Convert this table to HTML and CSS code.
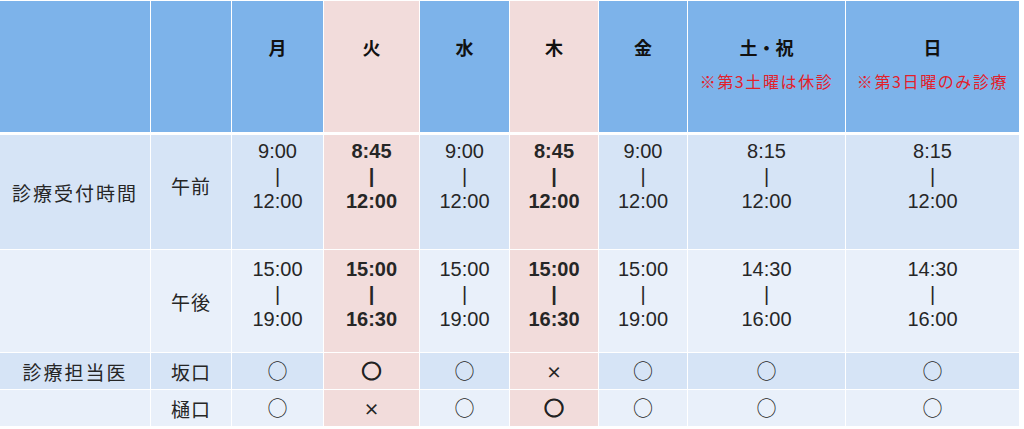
FILE: index.html
```html
<!DOCTYPE html>
<html lang="ja">
<head>
<meta charset="utf-8">
<title>診療時間</title>
<link rel="stylesheet" href="styles.css">
</head>
<body>
<table class="schedule">
  <colgroup>
    <col class="c-label"><col class="c-sub"><col class="c-mon"><col class="c-tue"><col class="c-wed"><col class="c-thu"><col class="c-fri"><col class="c-sat"><col class="c-sun">
  </colgroup>
  <thead>
    <tr>
      <th></th><th></th>
      <th><span class="day">月</span></th>
      <th class="pink"><span class="day">火</span></th>
      <th><span class="day">水</span></th>
      <th class="pink"><span class="day">木</span></th>
      <th><span class="day">金</span></th>
      <th><span class="day">土・祝</span><span class="note">※第3土曜は休診</span></th>
      <th><span class="day">日</span><span class="note">※第3日曜のみ診療</span></th>
    </tr>
  </thead>
  <tbody>
    <tr class="r-am">
      <td class="label">診療受付時間</td>
      <td class="sub sub-am">午前</td>
      <td class="time">9:00<br>|<br>12:00</td>
      <td class="time pink bold">8:45<br>|<br>12:00</td>
      <td class="time">9:00<br>|<br>12:00</td>
      <td class="time pink bold">8:45<br>|<br>12:00</td>
      <td class="time">9:00<br>|<br>12:00</td>
      <td class="time">8:15<br>|<br>12:00</td>
      <td class="time">8:15<br>|<br>12:00</td>
    </tr>
    <tr class="r-pm">
      <td class="label"></td>
      <td class="sub">午後</td>
      <td class="time">15:00<br>|<br>19:00</td>
      <td class="time pink bold">15:00<br>|<br>16:30</td>
      <td class="time">15:00<br>|<br>19:00</td>
      <td class="time pink bold">15:00<br>|<br>16:30</td>
      <td class="time">15:00<br>|<br>19:00</td>
      <td class="time">14:30<br>|<br>16:00</td>
      <td class="time">14:30<br>|<br>16:00</td>
    </tr>
    <tr class="r-doc1">
      <td class="label">診療担当医</td>
      <td class="sub">坂口</td>
      <td class="mark">○</td>
      <td class="mark pink bold">○</td>
      <td class="mark">○</td>
      <td class="mark pink x">×</td>
      <td class="mark">○</td>
      <td class="mark">○</td>
      <td class="mark">○</td>
    </tr>
    <tr class="r-doc2">
      <td class="label"></td>
      <td class="sub">樋口</td>
      <td class="mark">○</td>
      <td class="mark pink x">×</td>
      <td class="mark">○</td>
      <td class="mark pink bold">○</td>
      <td class="mark">○</td>
      <td class="mark">○</td>
      <td class="mark">○</td>
    </tr>
  </tbody>
</table>
</body>
</html>
```

FILE: styles.css
```css
html, body {
  margin: 0;
  padding: 0;
  background: #ffffff;
}

.schedule {
  border-collapse: separate;
  border-spacing: 1px;
  table-layout: fixed;
  width: 1021px;
  margin: 0 0 0 -1px;
  font-family: "Noto Sans CJK JP", sans-serif;
  color: #262626;
}

.c-label { width: 150px; }
.c-sub { width: 80px; }
.c-mon { width: 91px; }
.c-tue { width: 95px; }
.c-wed { width: 89px; }
.c-thu { width: 88px; }
.c-fri { width: 88px; }
.c-sat { width: 157px; }
.c-sun { width: 173px; }

.schedule th,
.schedule td {
  box-sizing: border-box;
  padding: 0;
  text-align: center;
}

/* header */
.schedule thead th {
  height: 133px;
  background: #7db3ea;
  vertical-align: top;
  border-bottom: 2px solid #ffffff;
  color: #111111;
}

.schedule thead th.pink {
  background: #f2dcdb;
}

.day {
  display: block;
  margin-top: 33px;
  font-size: 18px;
  line-height: 26px;
  font-weight: bold;
}

.note {
  display: block;
  margin-top: 11px;
  font-size: 16px;
  line-height: 20px;
  letter-spacing: 1.6px;
  color: #e3202a;
  font-weight: normal;
}

/* body rows */
.r-am td { height: 114px; background: #d6e4f6; }
.r-pm td { height: 102px; background: #e9f0fa; }
.r-doc1 td { height: 36px; background: #d6e4f6; }
.r-doc2 td { height: 36px; background: #e9f0fa; }

.schedule td.pink { background: #f2dcdb; }

.label {
  font-size: 19px;
  letter-spacing: 2px;
  vertical-align: middle;
}

.sub {
  font-size: 19px;
  letter-spacing: 1px;
  vertical-align: middle;
}

.sub-am { padding-bottom: 14px !important; }

.time {
  font-family: "Liberation Sans", Arial, sans-serif;
  font-size: 20px;
  line-height: 25px;
  vertical-align: top;
  padding-top: 4px !important;
}

.r-pm .time { padding-top: 7px !important; }

.bold { font-weight: bold; }

.mark {
  font-size: 20px;
  line-height: 22px;
  vertical-align: middle;
}

.mark.bold {
  -webkit-text-stroke: 1.2px #222222;
}

.mark.x {
  font-size: 16px;
  font-weight: bold;
}
```
